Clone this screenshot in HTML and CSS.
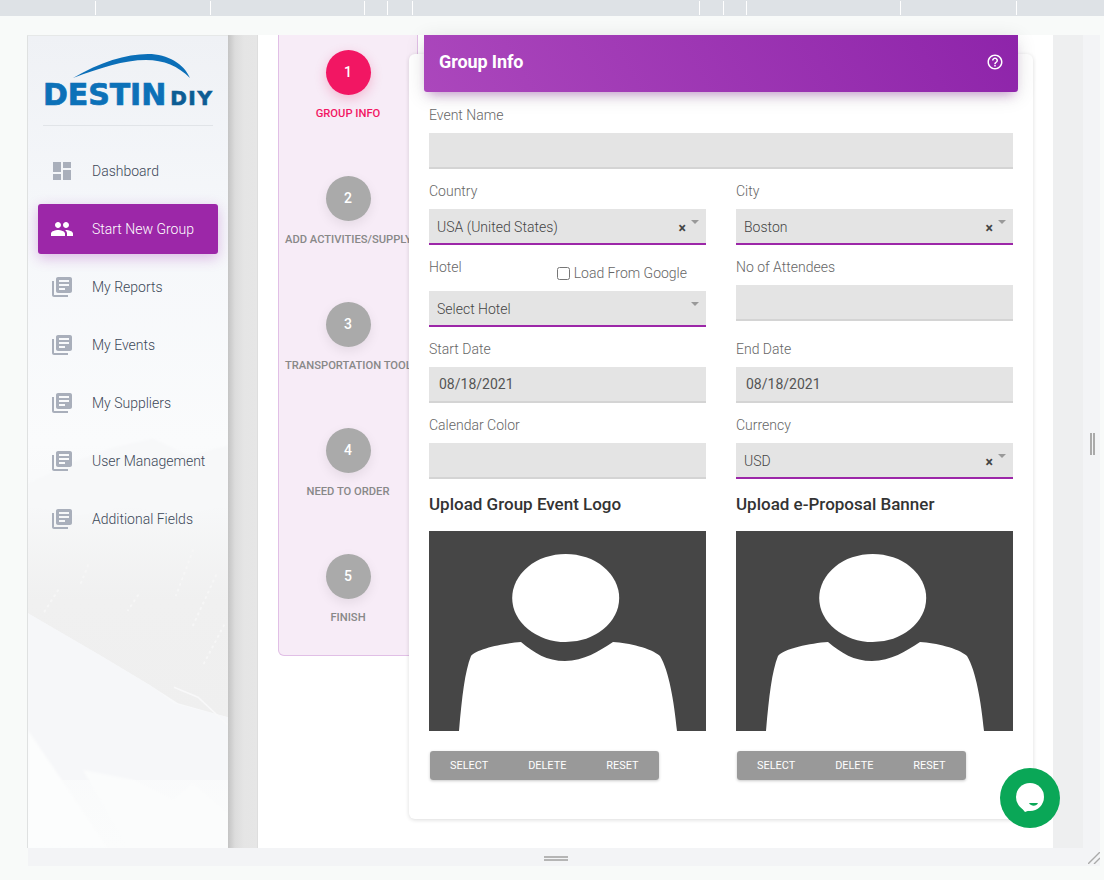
FILE: index.html
```html
<!DOCTYPE html>
<html lang="en">
<head>
    <meta charset="UTF-8">
    <meta name="viewport" content="width=device-width, initial-scale=1.0">
    <title>Group Info</title>
    <link rel="stylesheet" href="styles.css">
</head>
<body>
    <div class="topbar">
        <span></span><span></span><span></span><span></span><span></span><span></span><span></span><span></span><span></span><span></span>
    </div>
    <div class="workspace">
        <aside class="sidebar">
            <svg class="sidebar-bg" viewBox="0 0 200 813" preserveAspectRatio="none" aria-hidden="true">
                <defs>
                    <linearGradient id="sideFade" x1="0" y1="0" x2="0" y2="1">
                        <stop offset="0" stop-color="#eff1f5"/>
                        <stop offset="0.22" stop-color="#f5f7fa"/>
                        <stop offset="0.5" stop-color="#fafbfc"/>
                        <stop offset="0.62" stop-color="#f7f8f9"/>
                        <stop offset="0.72" stop-color="#f6f7f9"/>
                        <stop offset="1" stop-color="#fbfcfc"/>
                    </linearGradient>
                    <linearGradient id="treeFade" x1="0" y1="0" x2="0" y2="1">
                        <stop offset="0" stop-color="#efefef" stop-opacity="0"/>
                        <stop offset="0.45" stop-color="#f0f0f0"/>
                        <stop offset="1" stop-color="#efefef"/>
                    </linearGradient>
                    <filter id="soft"><feGaussianBlur stdDeviation="1.2"/></filter>
                </defs>
                <rect width="200" height="813" fill="url(#sideFade)"/>
                <path d="M0 448 L50 425 L85 412 L125 403 L160 420 L200 410 V690 L130 650 L72 620 L0 578 Z" fill="#f7f8f9" filter="url(#soft)"/>
                <path d="M0 470 L50 480 L100 470 L150 480 L200 470 V682 L150 668 L122 650 L72 620 L0 578 Z" fill="url(#treeFade)"/>
                <path d="M0 578 L72 620 L122 650 L145 668 L200 682 V745 L0 745 Z" fill="#f6f7f9"/>
                <path d="M146 652 L170 662 L200 690" fill="none" stroke="#f8f8f9" stroke-width="1.5"/>
                <path d="M165 515 L148 560 M188 540 L165 590 M196 590 L175 630 M30 555 L14 580 M60 530 L52 550 M110 560 L100 575" fill="none" stroke="#f6f6f6" stroke-width="2" stroke-linecap="round" stroke-dasharray="1 5"/>
                <path d="M55 735 L105 745 L145 765 L165 748 L200 778 V813 H100 L55 735 Z" fill="#fbfcfc" filter="url(#soft)"/>
                <path d="M0 695 L80 813 H0 Z" fill="#fcfdfd" filter="url(#soft)"/>
            </svg>
            <div class="logo">
                <svg class="logo-swoosh" viewBox="0 0 120 26" aria-hidden="true">
                    <path d="M1 25 C28 9 54 1 76 1 C96 1 112 11 118 25 C106 13 92 7 74 7 C52 7 28 15 1 25 Z" fill="#0b6fb8"/>
                </svg>
                <div class="logo-text">DESTIN<span>DIY</span></div>
            </div>
            <nav class="menu">
                <a class="menu-item">
                    <svg viewBox="0 0 24 24"><path d="M3 13h8V3H3v10zm0 8h8v-6H3v6zm10 0h8V11h-8v10zm0-18v6h8V3h-8z"/></svg>
                    Dashboard
                </a>
                <a class="menu-item active">
                    <svg viewBox="0 0 24 24"><path d="M16 11c1.66 0 2.99-1.34 2.99-3S17.66 5 16 5c-1.66 0-3 1.34-3 3s1.34 3 3 3zm-8 0c1.66 0 2.99-1.34 2.99-3S9.66 5 8 5C6.34 5 5 6.34 5 8s1.34 3 3 3zm0 2c-2.33 0-7 1.17-7 3.5V19h14v-2.5c0-2.33-4.67-3.5-7-3.5zm8 0c-.29 0-.62.02-.97.05 1.16.84 1.97 1.97 1.97 3.45V19h6v-2.5c0-2.33-4.67-3.5-7-3.5z"/></svg>
                    Start New Group
                </a>
                <a class="menu-item">
                    <svg viewBox="0 0 24 24"><path d="M4 6H2v14c0 1.1.9 2 2 2h14v-2H4V6zm16-4H8c-1.1 0-2 .9-2 2v12c0 1.1.9 2 2 2h12c1.1 0 2-.9 2-2V4c0-1.1-.9-2-2-2zm-1 9H9V9h10v2zm-4 4H9v-2h6v2zm4-8H9V5h10v2z"/></svg>
                    My Reports
                </a>
                <a class="menu-item">
                    <svg viewBox="0 0 24 24"><path d="M4 6H2v14c0 1.1.9 2 2 2h14v-2H4V6zm16-4H8c-1.1 0-2 .9-2 2v12c0 1.1.9 2 2 2h12c1.1 0 2-.9 2-2V4c0-1.1-.9-2-2-2zm-1 9H9V9h10v2zm-4 4H9v-2h6v2zm4-8H9V5h10v2z"/></svg>
                    My Events
                </a>
                <a class="menu-item">
                    <svg viewBox="0 0 24 24"><path d="M4 6H2v14c0 1.1.9 2 2 2h14v-2H4V6zm16-4H8c-1.1 0-2 .9-2 2v12c0 1.1.9 2 2 2h12c1.1 0 2-.9 2-2V4c0-1.1-.9-2-2-2zm-1 9H9V9h10v2zm-4 4H9v-2h6v2zm4-8H9V5h10v2z"/></svg>
                    My Suppliers
                </a>
                <a class="menu-item">
                    <svg viewBox="0 0 24 24"><path d="M4 6H2v14c0 1.1.9 2 2 2h14v-2H4V6zm16-4H8c-1.1 0-2 .9-2 2v12c0 1.1.9 2 2 2h12c1.1 0 2-.9 2-2V4c0-1.1-.9-2-2-2zm-1 9H9V9h10v2zm-4 4H9v-2h6v2zm4-8H9V5h10v2z"/></svg>
                    User Management
                </a>
                <a class="menu-item">
                    <svg viewBox="0 0 24 24"><path d="M4 6H2v14c0 1.1.9 2 2 2h14v-2H4V6zm16-4H8c-1.1 0-2 .9-2 2v12c0 1.1.9 2 2 2h12c1.1 0 2-.9 2-2V4c0-1.1-.9-2-2-2zm-1 9H9V9h10v2zm-4 4H9v-2h6v2zm4-8H9V5h10v2z"/></svg>
                    Additional Fields
                </a>
            </nav>
        </aside>
        <div class="side-shadow"></div>
        <main class="content">
            <div class="stepper">
                <div class="step current"><div class="step-num">1</div><div class="step-label">Group Info</div></div>
                <div class="step"><div class="step-num">2</div><div class="step-label">Add Activities/Supply</div></div>
                <div class="step"><div class="step-num">3</div><div class="step-label">Transportation Tool</div></div>
                <div class="step"><div class="step-num">4</div><div class="step-label">Need To Order</div></div>
                <div class="step"><div class="step-num">5</div><div class="step-label">Finish</div></div>
            </div>
            <section class="card">
                <header class="card-header">
                    <h2>Group Info</h2>
                    <svg viewBox="0 0 24 24"><path d="M11 18h2v-2h-2v2zm1-16C6.48 2 2 6.48 2 12s4.48 10 10 10 10-4.48 10-10S17.52 2 12 2zm0 18c-4.41 0-8-3.59-8-8s3.59-8 8-8 8 3.59 8 8-3.59 8-8 8zm0-14c-2.21 0-4 1.79-4 4h2c0-1.1.9-2 2-2s2 .9 2 2c0 2-3 1.75-3 5h2c0-2.25 3-2.5 3-5 0-2.21-1.79-4-4-4z"/></svg>
                </header>
                <form class="form-grid">
                    <div class="field wide">
                        <label for="eventName">Event Name</label>
                        <input type="text" id="eventName">
                    </div>
                    <div class="field">
                        <label>Country</label>
                        <div class="select-box">USA (United States)<b>×</b><i></i></div>
                    </div>
                    <div class="field">
                        <label>City</label>
                        <div class="select-box">Boston<b>×</b><i></i></div>
                    </div>
                    <div class="field">
                        <div class="label-row">
                            <label>Hotel</label>
                            <label class="check"><input type="checkbox"> Load From Google</label>
                        </div>
                        <div class="select-box">Select Hotel<i></i></div>
                    </div>
                    <div class="field">
                        <label for="attendees">No of Attendees</label>
                        <input type="text" id="attendees">
                    </div>
                    <div class="field">
                        <label for="startDate">Start Date</label>
                        <input type="text" id="startDate" value="08/18/2021">
                    </div>
                    <div class="field">
                        <label for="endDate">End Date</label>
                        <input type="text" id="endDate" value="08/18/2021">
                    </div>
                    <div class="field">
                        <label for="calColor">Calendar Color</label>
                        <input type="text" id="calColor">
                    </div>
                    <div class="field">
                        <label>Currency</label>
                        <div class="select-box">USD<b>×</b><i></i></div>
                    </div>
                    <div class="upload">
                        <h3>Upload Group Event Logo</h3>
                        <svg class="avatar" viewBox="0 0 277 200" aria-hidden="true">
                            <rect width="277" height="200" fill="#464646"/>
                            <ellipse cx="136.7" cy="67" rx="53.5" ry="44" fill="#fff"/>
                            <path d="M30 200 C33 165 36 140 42 125 C47 118 75 112 92 111 C105 122 118 130 136 130 C155 130 170 120 184 111 C200 112 222 117 231 125 C240 140 245 170 248 200 Z" fill="#fff"/>
                        </svg>
                        <div class="btn-group">
                            <button type="button">Select</button><button type="button">Delete</button><button type="button">Reset</button>
                        </div>
                    </div>
                    <div class="upload">
                        <h3>Upload e-Proposal Banner</h3>
                        <svg class="avatar" viewBox="0 0 277 200" aria-hidden="true">
                            <rect width="277" height="200" fill="#464646"/>
                            <ellipse cx="136.7" cy="67" rx="53.5" ry="44" fill="#fff"/>
                            <path d="M30 200 C33 165 36 140 42 125 C47 118 75 112 92 111 C105 122 118 130 136 130 C155 130 170 120 184 111 C200 112 222 117 231 125 C240 140 245 170 248 200 Z" fill="#fff"/>
                        </svg>
                        <div class="btn-group">
                            <button type="button">Select</button><button type="button">Delete</button><button type="button">Reset</button>
                        </div>
                    </div>
                </form>
            </section>
        </main>
        <div class="gutter"></div>
        <div class="gutter-outer"><span class="v-grip"></span></div>
    </div>
    <div class="statusbar">
        <span class="h-grip"></span>
        <svg class="resize" viewBox="0 0 12 12" aria-hidden="true">
            <path d="M0 12 L12 0 M6 12 L12 6" stroke="#aaa" stroke-width="1.4" fill="none"/>
        </svg>
    </div>
    <div class="chat">
        <svg viewBox="0 0 60 60" aria-hidden="true">
            <circle cx="30" cy="30" r="30" fill="#0aa757"/>
            <circle cx="30" cy="29" r="14" fill="#fff"/>
            <path d="M19 37 L25 44 L33 41 Z" fill="#fff"/>
            <path d="M29 35 H38 C36.5 38.5 31 38.5 29 35 Z" fill="#0aa757"/>
        </svg>
    </div>
</body>
</html>
```

FILE: styles.css
```css
* {
    box-sizing: border-box;
}
html, body {
    height: 100%;
}
body {
    font-family: Roboto, Arial, sans-serif;
    margin: 0;
    background-color: #f8faf9;
    overflow: hidden;
    position: relative;
}

/* top strip */
.topbar {
    height: 16px;
    background-color: #dee2e6;
    display: grid;
    grid-template-columns: 96px 115px 154px 23px 25px 287px 24px 23px 154px 116px;
}
.topbar span {
    border-right: 1px solid #fff;
    margin-top: 1px;
    margin-bottom: 1px;
}

.workspace {
    display: flex;
    height: 813px;
    margin-top: 19px;
    margin-left: 27px;
    margin-right: 4px;
}

/* sidebar */
.sidebar {
    width: 201px;
    flex-shrink: 0;
    position: relative;
    border-left: 1px solid #dfe1e1;
    border-top: 1px solid #e6e8e8;
    padding: 17px 10px 0;
    overflow: hidden;
}
.sidebar-bg {
    position: absolute;
    top: 0;
    left: 0;
    width: 100%;
    height: 100%;
}
.logo {
    position: relative;
    height: 73px;
    margin: 0 5px;
    border-bottom: 1px solid #e1e4e8;
}
.logo-swoosh {
    display: block;
    width: 120px;
    height: 26px;
    margin-left: 29px;
}
.logo-text {
    font-family: "DejaVu Sans", sans-serif;
    font-weight: bold;
    font-size: 30px;
    line-height: 24px;
    margin-top: 4px;
    color: #0c71b8;
    letter-spacing: -0.1px;
    -webkit-text-stroke: 0.7px #0c71b8;
    white-space: nowrap;
}
.logo-text span {
    font-size: 20px;
    letter-spacing: 1.6px;
    margin-left: 4px;
    color: #0c5c94;
    -webkit-text-stroke: 0.7px #0c5c94;
}
.menu {
    position: relative;
    margin-top: 20px;
    display: flex;
    flex-direction: column;
    gap: 8px;
}
.menu-item {
    height: 50px;
    display: flex;
    align-items: center;
    gap: 18px;
    padding-left: 12px;
    border-radius: 3px;
    font-size: 14px;
    font-weight: 300;
    color: #3c4858;
}
.menu-item svg {
    width: 24px;
    height: 24px;
    fill: #a9afbb;
    flex-shrink: 0;
}
.menu-item.active {
    background-color: #9c27a8;
    color: #fff;
    box-shadow: 0 4px 14px rgba(156, 39, 176, 0.3);
}
.menu-item.active svg {
    fill: #fff;
}

.side-shadow {
    width: 30px;
    flex-shrink: 0;
    background: linear-gradient(to right, #c4c4c4, #dcdcdc 7px, #e5e5e5 16px, #e6e6e6);
    border-right: 1px solid #dedede;
}

/* main area */
.content {
    width: 795px;
    flex-shrink: 0;
    background-color: #fff;
    padding-left: 20px;
    display: flex;
    align-items: flex-start;
}
.stepper {
    width: 140px;
    flex-shrink: 0;
    background-color: #f7ecf7;
    border: 1px solid #e1bfe6;
    border-top: none;
    border-radius: 0 0 6px 6px;
    padding: 15px 6px 30px;
    display: flex;
    flex-direction: column;
    gap: 55px;
}
.step {
    display: flex;
    flex-direction: column;
    align-items: center;
}
.step-num {
    width: 45px;
    height: 45px;
    padding-bottom: 1px;
    border-radius: 50%;
    background-color: #aaa;
    color: #fff;
    font-size: 14px;
    font-weight: 500;
    display: flex;
    align-items: center;
    justify-content: center;
    box-shadow: 0 4px 12px rgba(0, 0, 0, 0.08);
}
.step-label {
    margin-top: 11px;
    margin-bottom: -1px;
    width: 126px;
    line-height: 16px;
    font-size: 11.2px;
    font-weight: 500;
    text-transform: uppercase;
    text-align: center;
    white-space: nowrap;
    color: #888;
}
.step.current .step-num {
    background-color: #f21663;
    box-shadow: 0 4px 12px rgba(233, 30, 99, 0.25);
}
.step.current .step-label {
    color: #f21663;
}

.card {
    position: relative;
    width: 624px;
    height: 765px;
    margin-top: 19px;
    margin-left: -9px;
    background-color: #fff;
    border-radius: 6px;
    box-shadow: 0 1px 4px rgba(0, 0, 0, 0.14);
    padding: 0 20px;
    flex-shrink: 0;
}
.card-header {
    height: 57px;
    margin: -19px -5px 13px;
    padding: 0 14px 4px 15px;
    display: flex;
    align-items: center;
    justify-content: space-between;
    border-radius: 0 0 3px 3px;
    background: linear-gradient(60deg, #ab47bc, #8e24aa);
    box-shadow: 0 4px 20px rgba(0, 0, 0, 0.12), 0 7px 10px -5px rgba(156, 39, 176, 0.4);
    color: #fff;
}
.card-header h2 {
    margin: 0;
    font-size: 18px;
    font-weight: 700;
    letter-spacing: -0.1px;
}
.card-header svg {
    width: 18px;
    height: 18px;
    fill: #fff;
}

.form-grid {
    display: grid;
    grid-template-columns: 277px 277px;
    gap: 12px 30px;
}
.field {
    display: flex;
    flex-direction: column;
    min-width: 0;
}
.field.wide {
    grid-column: 1 / 3;
}
.field label {
    font-size: 14px;
    line-height: 20px;
    font-weight: 300;
    color: #666;
    margin-bottom: 8px;
}
.label-row {
    display: flex;
    justify-content: space-between;
    height: 26px;
    margin-bottom: 8px;
}
.field .check {
    display: flex;
    align-items: center;
    margin-top: 6px;
    margin-right: 19px;
    margin-bottom: 0;
    gap: 4px;
}
.check input {
    width: 13px;
    height: 13px;
    margin: 0;
}
.field input[type="text"] {
    height: 36px;
    width: 100%;
    border: none;
    border-bottom: 2px solid #d4d4d4;
    border-radius: 0;
    background-color: #e4e4e4;
    padding: 0 10px;
    font-family: inherit;
    font-size: 14px;
    color: #555;
}
.select-box {
    position: relative;
    height: 36px;
    background-color: #e4e4e4;
    border-bottom: 2px solid #9c27a8;
    padding: 0 8px;
    font-size: 14px;
    font-weight: 300;
    line-height: 36px;
    color: #444;
}
.select-box b {
    position: absolute;
    right: 20px;
    top: 1px;
    font-size: 14px;
    font-weight: 700;
    color: #444;
}
.select-box i {
    position: absolute;
    right: 7px;
    top: 11px;
    border-left: 4px solid transparent;
    border-right: 4px solid transparent;
    border-top: 4px solid #999;
}

.upload h3 {
    margin: 2px 0 16px;
    font-size: 17px;
    line-height: 22px;
    font-weight: 500;
    color: #333;
}
.avatar {
    display: block;
    width: 277px;
    height: 200px;
}
.btn-group {
    display: inline-flex;
    margin: 20px 0 0 1px;
    border-radius: 3px;
    box-shadow: 0 1px 3px rgba(0, 0, 0, 0.22);
}
.btn-group button {
    height: 29px;
    padding: 0 20px;
    border: none;
    background-color: #999;
    color: #fff;
    font-family: inherit;
    font-size: 10.9px;
    text-transform: uppercase;
}
.btn-group button:first-child {
    border-radius: 3px 0 0 3px;
}
.btn-group button:last-child {
    border-radius: 0 3px 3px 0;
}

/* right side strips and bottom handle */
.gutter {
    width: 30px;
    flex-shrink: 0;
    background-color: #eeeff0;
}
.gutter-outer {
    flex: 1;
    background-color: #f3f4f6;
    display: flex;
    align-items: center;
    justify-content: center;
}
.v-grip {
    width: 5px;
    height: 22px;
    border-left: 2px solid #aaa;
    border-right: 2px solid #aaa;
    margin-left: 2px;
    margin-top: 4px;
}
.statusbar {
    position: relative;
    height: 18px;
    margin-left: 28px;
    margin-right: 4px;
    background-color: #f3f4f6;
    display: flex;
    align-items: center;
    justify-content: center;
}
.h-grip {
    width: 24px;
    height: 5px;
    border-top: 2px solid #b5b5b5;
    border-bottom: 2px solid #b5b5b5;
    margin-right: 16px;
    margin-top: 2px;
}
.resize {
    position: absolute;
    right: 0;
    bottom: 2px;
    width: 12px;
    height: 12px;
}

.chat {
    position: absolute;
    left: 1000px;
    top: 768px;
    width: 60px;
    height: 60px;
}
.chat svg {
    display: block;
    width: 60px;
    height: 60px;
}
```
